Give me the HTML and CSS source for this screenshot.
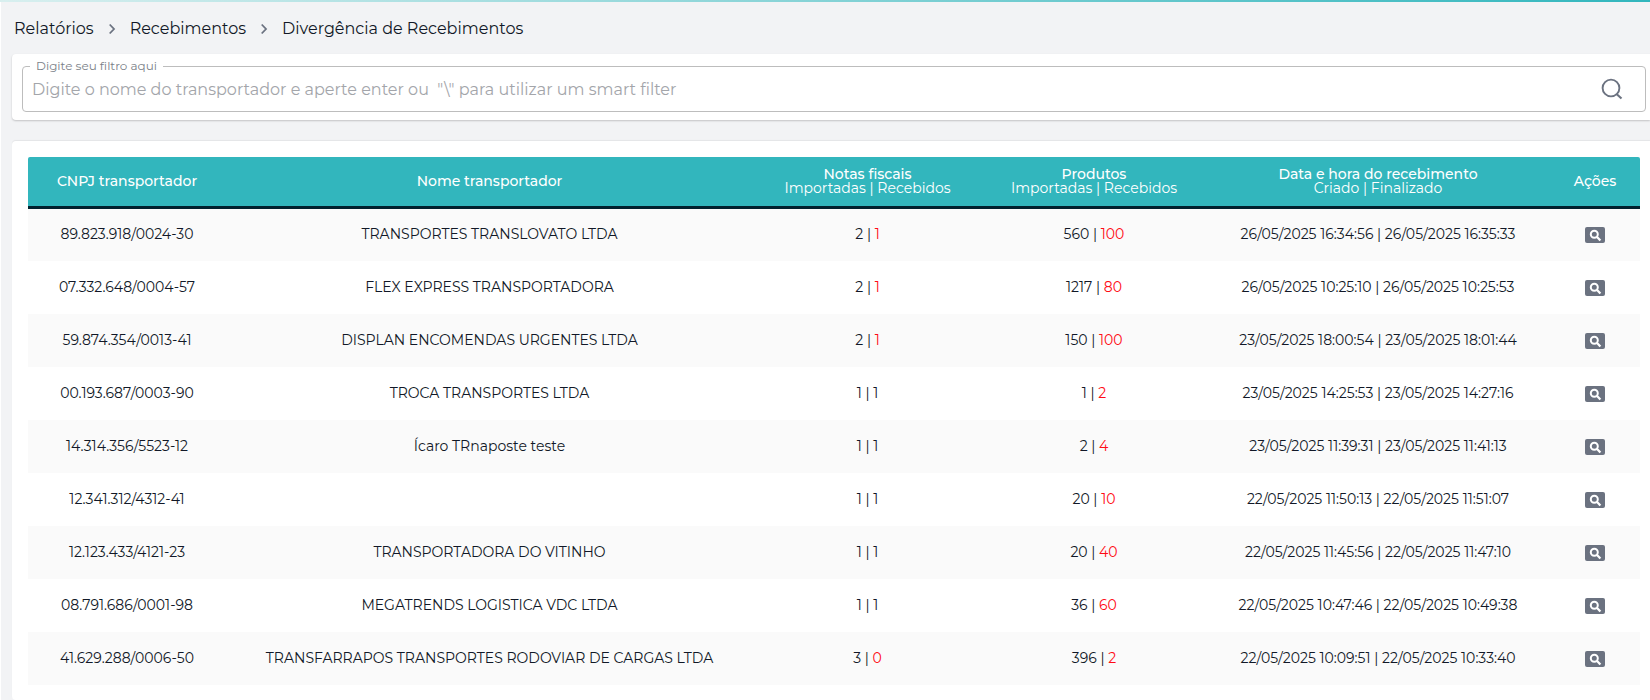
FILE: index.html
```html
<!DOCTYPE html>
<html lang="pt-BR">
<head>
<meta charset="utf-8">
<meta name="viewport" content="width=device-width, initial-scale=1">
<title>Divergência de Recebimentos</title>
<link rel="stylesheet" href="styles.css">
</head>
<body>
<svg class="sprite" aria-hidden="true">
  <symbol id="chevron" viewBox="0 0 8 12"><path d="M1.7 1.5L6 6l-4.3 4.5" fill="none" stroke="currentColor" stroke-width="1.8"/></symbol>
  <symbol id="view" viewBox="0 0 20 16"><rect width="20" height="16" rx="2" fill="#6b7280"/><circle cx="9.3" cy="7.3" r="3.5" fill="none" stroke="#fff" stroke-width="2"/><path d="M11.8 9.8l3.6 3.7" stroke="#fff" stroke-width="2.3"/></symbol>
</svg>
<div class="progress"></div>
<main class="page">
  <nav class="breadcrumb" aria-label="Navegação">
    <a href="#">Relatórios</a>
    <svg class="chevron"><use href="#chevron"/></svg>
    <a href="#">Recebimentos</a>
    <svg class="chevron"><use href="#chevron"/></svg>
    <a href="#">Divergência de Recebimentos</a>
  </nav>
  <form class="card filter">
    <div class="field">
      <label class="field-label" for="filtro">Digite seu filtro aqui</label>
      <input class="field-input" id="filtro" type="text" placeholder="Digite o nome do transportador e aperte enter ou &nbsp;&quot;\&quot; para utilizar um smart filter">
      <button class="search" type="button" aria-label="Buscar">
        <svg class="search-icon" viewBox="0 0 24 24"><circle cx="11" cy="11" r="8.4" fill="none" stroke="currentColor" stroke-width="1.9"/><path d="M16.8 17.2L21.5 21.5" stroke="currentColor" stroke-width="2.1"/></svg>
      </button>
    </div>
  </form>
  <section class="card report">
    <table class="table">
      <colgroup><col class="col-cnpj"><col class="col-name"><col class="col-notes"><col class="col-products"><col class="col-dates"><col class="col-actions"></colgroup>
      <thead>
        <tr>
          <th>CNPJ transportador</th>
          <th>Nome transportador</th>
          <th>Notas fiscais<span class="sub">Importadas | Recebidos</span></th>
          <th>Produtos<span class="sub">Importadas | Recebidos</span></th>
          <th>Data e hora do recebimento<span class="sub">Criado | Finalizado</span></th>
          <th>Ações</th>
        </tr>
      </thead>
      <tbody>
        <tr><td>89.823.918/0024-30</td><td>TRANSPORTES TRANSLOVATO LTDA</td><td>2 | <span class="diff">1</span></td><td>560 | <span class="diff">100</span></td><td>26/05/2025 16:34:56 | 26/05/2025 16:35:33</td><td><button class="view" type="button" aria-label="Ver detalhes"><svg><use href="#view"/></svg></button></td></tr>
        <tr><td>07.332.648/0004-57</td><td>FLEX EXPRESS TRANSPORTADORA</td><td>2 | <span class="diff">1</span></td><td>1217 | <span class="diff">80</span></td><td>26/05/2025 10:25:10 | 26/05/2025 10:25:53</td><td><button class="view" type="button" aria-label="Ver detalhes"><svg><use href="#view"/></svg></button></td></tr>
        <tr><td>59.874.354/0013-41</td><td>DISPLAN ENCOMENDAS URGENTES LTDA</td><td>2 | <span class="diff">1</span></td><td>150 | <span class="diff">100</span></td><td>23/05/2025 18:00:54 | 23/05/2025 18:01:44</td><td><button class="view" type="button" aria-label="Ver detalhes"><svg><use href="#view"/></svg></button></td></tr>
        <tr><td>00.193.687/0003-90</td><td>TROCA TRANSPORTES LTDA</td><td>1 | 1</td><td>1 | <span class="diff">2</span></td><td>23/05/2025 14:25:53 | 23/05/2025 14:27:16</td><td><button class="view" type="button" aria-label="Ver detalhes"><svg><use href="#view"/></svg></button></td></tr>
        <tr><td>14.314.356/5523-12</td><td>Ícaro TRnaposte teste</td><td>1 | 1</td><td>2 | <span class="diff">4</span></td><td>23/05/2025 11:39:31 | 23/05/2025 11:41:13</td><td><button class="view" type="button" aria-label="Ver detalhes"><svg><use href="#view"/></svg></button></td></tr>
        <tr><td>12.341.312/4312-41</td><td></td><td>1 | 1</td><td>20 | <span class="diff">10</span></td><td>22/05/2025 11:50:13 | 22/05/2025 11:51:07</td><td><button class="view" type="button" aria-label="Ver detalhes"><svg><use href="#view"/></svg></button></td></tr>
        <tr><td>12.123.433/4121-23</td><td>TRANSPORTADORA DO VITINHO</td><td>1 | 1</td><td>20 | <span class="diff">40</span></td><td>22/05/2025 11:45:56 | 22/05/2025 11:47:10</td><td><button class="view" type="button" aria-label="Ver detalhes"><svg><use href="#view"/></svg></button></td></tr>
        <tr><td>08.791.686/0001-98</td><td>MEGATRENDS LOGISTICA VDC LTDA</td><td>1 | 1</td><td>36 | <span class="diff">60</span></td><td>22/05/2025 10:47:46 | 22/05/2025 10:49:38</td><td><button class="view" type="button" aria-label="Ver detalhes"><svg><use href="#view"/></svg></button></td></tr>
        <tr><td>41.629.288/0006-50</td><td>TRANSFARRAPOS TRANSPORTES RODOVIAR DE CARGAS LTDA</td><td>3 | <span class="diff">0</span></td><td>396 | <span class="diff">2</span></td><td>22/05/2025 10:09:51 | 22/05/2025 10:33:40</td><td><button class="view" type="button" aria-label="Ver detalhes"><svg><use href="#view"/></svg></button></td></tr>
      </tbody>
    </table>
  </section>
</main>
</body>
</html>
```
FILE: styles.css
```css
* { box-sizing: border-box; }
html { height: 100%; }
body {
  margin: 0;
  height: 100%;
  display: flex;
  flex-direction: column;
  overflow: hidden;
  background: #f2f3f5;
  color: #111827;
  font-family: Montserrat, Inter, "Open Sans", sans-serif;
  font-size: 14px;
}
button { padding: 0; border: 0; background: none; cursor: pointer; }
.sprite { position: absolute; width: 0; height: 0; }
.progress { flex: none; height: 2px; background: linear-gradient(90deg, #d8efef, #32b6bd); }
.page {
  flex: 1;
  display: flex;
  flex-direction: column;
  padding-left: 11px;
  border-left: 1px solid #fff;
}
.breadcrumb {
  display: flex;
  align-items: center;
  gap: 14px;
  height: 52px;
  padding: 1px 0 0 2px;
  font-size: 16px;
}
.breadcrumb a { color: inherit; text-decoration: none; }
.chevron { width: 8px; height: 12px; color: #6b7280; }
.card {
  background: #fff;
  border-radius: 4px 0 0 4px;
  box-shadow: 0 1px 2px rgba(0, 0, 0, 0.2);
}
.filter { padding: 12px 4px 8px 10px; }
.field {
  position: relative;
  display: flex;
  align-items: center;
  height: 46px;
  border: 1px solid #bdbdbd;
  border-radius: 4px;
}
.field-label {
  position: absolute;
  top: -9px;
  left: 7px;
  padding: 0 6px;
  background: #fff;
  color: #7b7f88;
  font-size: 12px;
  line-height: 16px;
}
.field-input {
  flex: 1;
  height: 100%;
  padding: 0 9px;
  border: 0;
  outline: 0;
  background: none;
  font-family: inherit;
  font-size: 16px;
}
.field-input::placeholder { color: #a3a5aa; opacity: 1; }
.search { display: flex; margin-right: 21px; color: #6b7280; }
.search-icon { width: 24px; height: 24px; }
.report { flex: 1; margin-top: 21px; padding: 16px 10px 0 16px; box-shadow: 0 -1px 1px rgba(0, 0, 0, 0.06); }
.table { width: 100%; table-layout: fixed; border-collapse: separate; border-spacing: 0; text-align: center; }
.col-cnpj { width: 198px; }
.col-name { width: 527px; }
.col-notes { width: 229px; }
.col-products { width: 224px; }
.col-dates { width: 344px; }
.col-actions { width: 90px; }
.table th {
  height: 52px;
  padding: 0 0 2px;
  border-bottom: 3px solid #00212e;
  background: #32b6bd;
  color: #fff;
  font-weight: 500;
  line-height: 14px;
}
.table th:first-child { border-top-left-radius: 2px; }
.table th:last-child { border-top-right-radius: 2px; }
.sub { display: block; font-weight: 400; }
.table td { height: 53px; padding: 0 0 1px; }
.table tbody tr:first-child td { height: 52px; padding-bottom: 2px; }
.table tbody tr:nth-child(odd) { background: #fafafa; }
.diff { color: #ff0a14; }
.view { vertical-align: middle; }
.view svg { display: block; width: 20px; height: 16px; }
```
